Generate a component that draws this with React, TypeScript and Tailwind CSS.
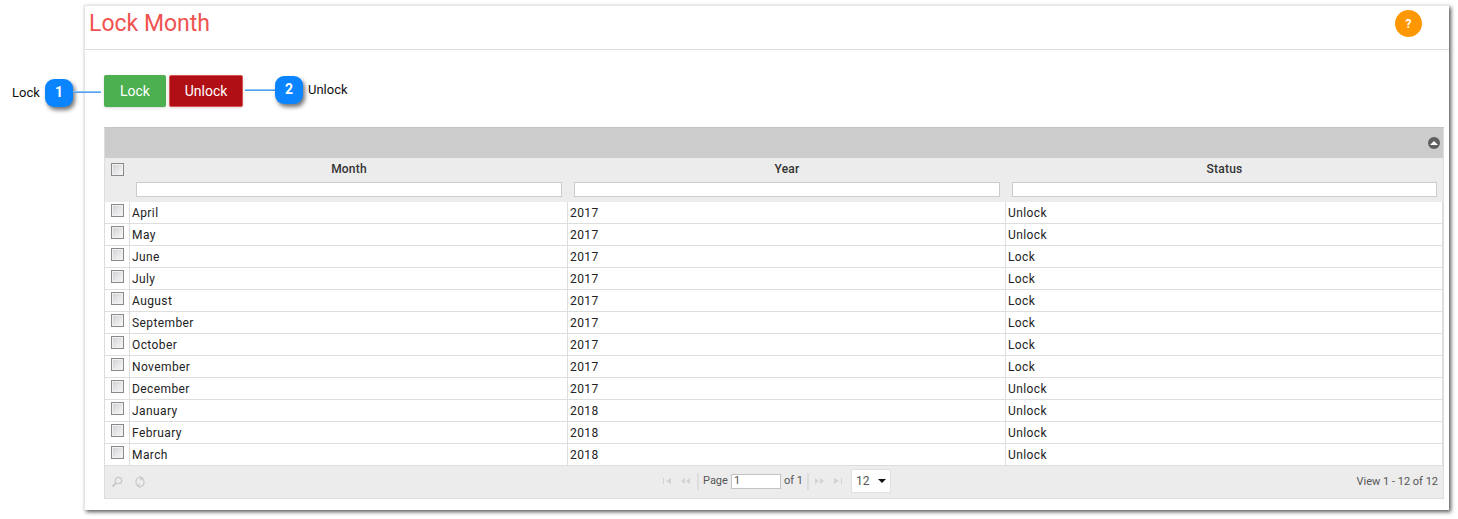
import React from 'react'

const rows = [
  ['April', '2017', 'Unlock'],
  ['May', '2017', 'Unlock'],
  ['June', '2017', 'Lock'],
  ['July', '2017', 'Lock'],
  ['August', '2017', 'Lock'],
  ['September', '2017', 'Lock'],
  ['October', '2017', 'Lock'],
  ['November', '2017', 'Lock'],
  ['December', '2017', 'Unlock'],
  ['January', '2018', 'Unlock'],
  ['February', '2018', 'Unlock'],
  ['March', '2018', 'Unlock'],
]

function Check() {
  return (
    <span className="block w-[13px] h-[13px] border border-[#8a8a8a] bg-gradient-to-br from-[#cfcfd4] to-[#fafafa] shadow-[inset_0_0_0_1px_#f0f0f0]" />
  )
}

function Callout({ n }: { n: number }) {
  return (
    <span className="flex items-center justify-center w-[28px] h-[28px] rounded-[9px] bg-[#0a84ff] text-white text-[14px] font-bold shadow-[2px_3px_4px_rgba(0,0,0,0.55)]">
      {n}
    </span>
  )
}

function PagerIcon({ d }: { d: string }) {
  return (
    <svg width="10" height="8" viewBox="0 0 10 8" className="text-[#d2d2d2]">
      <path d={d} fill="currentColor" />
    </svg>
  )
}

export default function App() {
  return (
    <div className="relative w-[1458px] h-[519px] overflow-hidden bg-white pl-[84px] pt-[5px] font-['Roboto',sans-serif] text-[#222]">
      {/* annotations over the page */}
      <div className="absolute left-[12px] top-[78px] z-10 flex items-center">
        <span className="w-[33px] text-[13px] leading-[28px] text-[#111] pt-[1px]">Lock</span>
        <Callout n={1} />
        <span className="w-[28px] h-[2px] mt-[-1px] bg-gradient-to-b from-[#a8d2f5] to-[#2f90ee]" />
      </div>
      <div className="absolute left-[245px] top-[75px] z-10 flex items-center">
        <span className="w-[30px] h-[2px] bg-gradient-to-b from-[#a8d2f5] to-[#2f90ee]" />
        <Callout n={2} />
        <span className="ml-[5px] text-[13px] leading-[28px] text-[#111] pt-[1px]">Unlock</span>
      </div>

      <div className="w-[1365px] h-[505px] bg-white border-t border-l border-[#e4e4e4] shadow-[2px_2px_4px_rgba(0,0,0,0.65)]">
        <div className="h-[44px] border-b border-[#dddddd] flex items-center justify-between pl-[4px] pr-[27px]">
          <h1 className="text-[23px] leading-[36px] text-[#ef5350] mt-[-8px]">Lock Month</h1>
          <span className="flex items-center justify-center w-[27px] h-[27px] rounded-full bg-[#ff9800] text-white text-[12px] font-bold mt-[-8px]">?</span>
        </div>

        <div className="pl-[19px] pt-[25px] flex gap-[3px]">
          <button className="w-[62px] h-[32px] rounded-[2px] bg-[#4caf50] text-white text-[14px] shadow-[0_1px_3px_rgba(0,0,0,0.15)]">Lock</button>
          <button className="w-[74px] h-[32px] rounded-[2px] bg-[#b01015] border border-[#d9534f] text-white text-[14px] shadow-[0_1px_3px_rgba(0,0,0,0.15)]">Unlock</button>
        </div>

        <div className="ml-[19px] mt-[20px] w-[1340px] text-[12px] tracking-[0.4px] border border-[#dddddd] border-t-[#c4c4c4]">
          <div className="h-[30px] bg-[#cccccc] flex items-center justify-end pr-[3px]">
            <span className="w-[12px] h-[12px] rounded-full bg-[#5f5f5f] flex items-center justify-center">
              <span className="w-0 h-0 border-x-[4px] border-x-transparent border-b-[4px] border-b-white" />
            </span>
          </div>

          <div className="bg-[#ececec] grid grid-cols-[25px_438px_438px_1fr] h-[23px] items-center font-medium tracking-[0.2px] text-[#333] pb-[2px]">
            <div className="pl-[6px] pt-[2px]"><Check /></div>
            <div className="text-center">Month</div>
            <div className="text-center">Year</div>
            <div className="text-center">Status</div>
          </div>
          <div className="bg-[#ececec] grid grid-cols-[25px_438px_438px_1fr] h-[21px] items-start">
            <div />
            <div className="pl-[6px] pr-[6px] pt-[1px]"><input className="block w-full h-[15px] bg-white border border-[#cccccc]" readOnly /></div>
            <div className="pl-[6px] pr-[6px] pt-[1px]"><input className="block w-full h-[15px] bg-white border border-[#cccccc]" readOnly /></div>
            <div className="pl-[6px] pr-[6px] pt-[1px]"><input className="block w-full h-[15px] bg-white border border-[#cccccc]" readOnly /></div>
          </div>

          {rows.map(([month, year, status]) => (
            <div key={month} className="grid grid-cols-[25px_438px_438px_1fr] h-[22px] border-b border-[#dedede] leading-[23px] bg-white">
              <div className="pl-[6px] pt-[2px] border-r border-[#dedede]"><Check /></div>
              <div className="pl-[2px] border-r border-[#dedede]">{month}</div>
              <div className="pl-[2px] border-r border-[#dedede]">{year}</div>
              <div className="pl-[2px] border-r border-[#dedede]">{status}</div>
            </div>
          ))}

          <div className="relative h-[32px] bg-[#ececec] flex items-center justify-between pl-[6px] pr-[5px] text-[11px] tracking-normal text-[#555]">
            <div className="flex items-center gap-[11px] text-[#c8c8c8]">
              <svg width="12" height="12" viewBox="0 0 12 12" fill="none" stroke="currentColor" strokeWidth="1.2">
                <circle cx="7.5" cy="4.5" r="3.2" />
                <path d="M5 7 L1.5 10.5" strokeWidth="2" />
              </svg>
              <svg width="12" height="12" viewBox="0 0 12 12" fill="none" stroke="currentColor" strokeWidth="1.1">
                <path d="M9.6 3.2 A4.2 4.2 0 0 0 2 6.2 A4.2 4.2 0 0 0 3.4 9.2" />
                <path d="M2.4 8.8 A4.2 4.2 0 0 0 10 5.8 A4.2 4.2 0 0 0 8.6 2.8" />
                <path d="M6 0.5 L8.2 2.4 L6 4 M6 8 L3.8 9.6 L6 11.5" />
              </svg>
            </div>
            <div className="absolute left-[557px] top-[-1px] h-full flex items-center">
              <PagerIcon d="M1 1h1v6H1z M9 1v6L4 4z" />
              <span className="w-[8px]" />
              <PagerIcon d="M5 1v6L1 4z M10 1v6L6 4z" />
              <span className="ml-[7px] mr-[4px] w-[2px] h-[17px] bg-[#dddddd]" />
              <span>Page</span>
              <input className="ml-[3px] w-[50px] h-[15px] bg-white border border-[#c4c4c4] px-[2px] text-[11px]" value="1" readOnly />
              <span className="ml-[3px]">of 1</span>
              <span className="ml-[4px] mr-[6px] w-[2px] h-[17px] bg-[#dddddd]" />
              <PagerIcon d="M0 1v6l4-3z M5 1v6l4-3z" />
              <span className="w-[8px]" />
              <PagerIcon d="M1 1v6l5-3z M8 1h1v6H8z" />
              <span className="ml-[8px] flex items-center justify-between w-[40px] h-[24px] bg-white border border-[#e0e0e0] rounded-[2px] pl-[4px] pr-[4px] text-[12px]">
                12
                <span className="w-0 h-0 border-x-[4px] border-x-transparent border-t-[4px] border-t-[#111]" />
              </span>
            </div>
            <span />
            <span>View 1 - 12 of 12</span>
          </div>
        </div>
      </div>
    </div>
  )
}
